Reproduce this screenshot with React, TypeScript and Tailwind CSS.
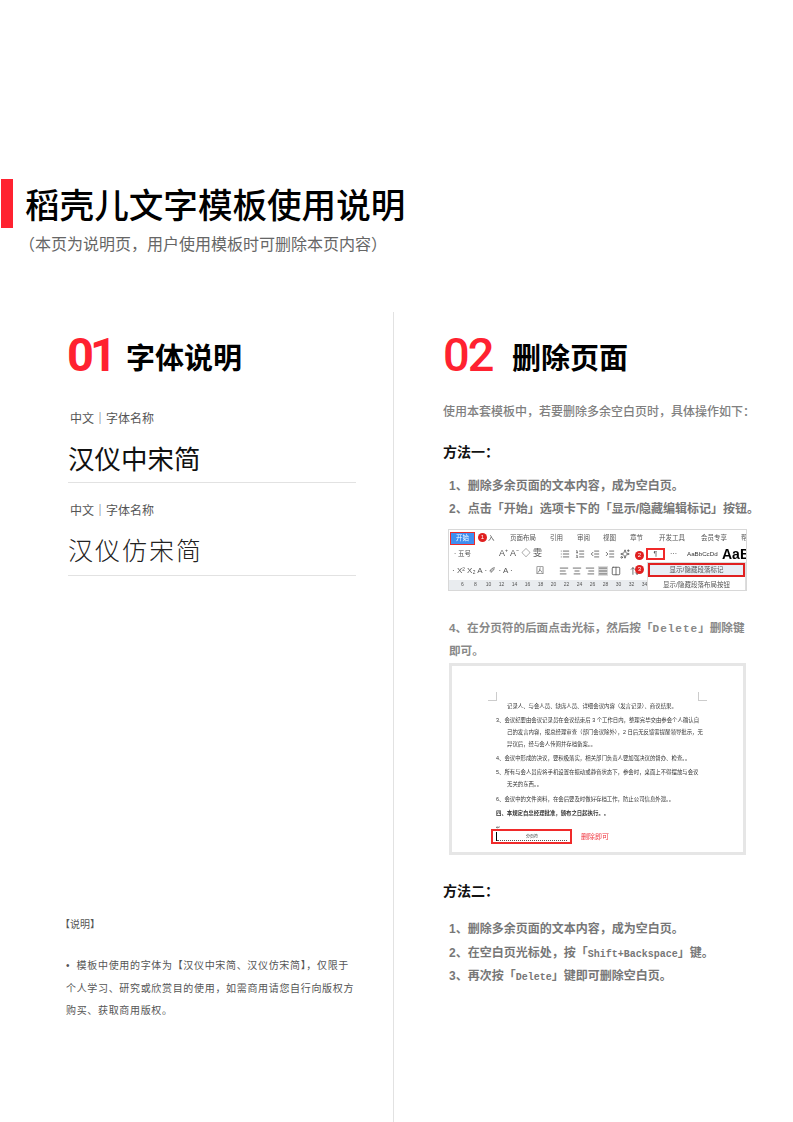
import { AlignCenter, AlignJustify, AlignLeft, AlignRight, ArrowUpDown, Columns2, Indent, List, ListOrdered, Outdent, Sparkles } from "lucide-react";

const cjk = "font-['Liberation_Sans','Noto_Sans_CJK_SC',sans-serif]";

const tabs = [
  { name: "页面布局", w: "w-[40px]" },
  { name: "引用", w: "w-[27px]" },
  { name: "审阅", w: "w-[26px]" },
  { name: "视图", w: "w-[27px]" },
  { name: "章节", w: "w-[29px]" },
  { name: "开发工具", w: "w-[42px]" },
  { name: "会员专享", w: "w-[40px]" },
];

const rulerMarks = [6, 8, 10, 12, 14, 16, 18, 20, 22, 24, 26, 28, 30, 32, 34];

const docLines = [
  { text: "记录人、与会人员、缺席人员、详细会议内容（发言记录）、商议结果。", cls: "pl-[11px] mb-[7px]" },
  { text: "3、会议纪要由会议记录员在会议结束后 3 个工作日内，整理完毕交由参会个人确认自", cls: "mb-[5px]" },
  { text: "己的发言内容，报总经理审查（部门会议除外），2 日后无反馈需提醒领导批示，无", cls: "pl-[11px] mb-[5px]" },
  { text: "异议后，经与会人传阅并存档备案。。", cls: "pl-[11px] mb-[7px]" },
  { text: "4、会议中形成的决议，要积极落实，相关部门负责人要加强决议的督办、检查。。", cls: "mb-[7px]" },
  { text: "5、所有与会人员应将手机设置在振动或静音状态下，参会时，桌面上不得摆放与会议", cls: "mb-[5px]" },
  { text: "无关的东西。。", cls: "pl-[11px] mb-[8px]" },
  { text: "6、会议中的文件资料，在会后要及时做好存档工作，防止公司信息外泄。。", cls: "mb-[7px]" },
];

function Badge({ n, pos }: { n: number; pos: string }) {
  return <span className={`absolute flex h-[9px] w-[9px] items-center justify-center rounded-full bg-[#e02020] text-[6px] text-white ${pos}`}>{n}</span>;
}

function Ribbon() {
  return (
    <div className="relative h-[62px] w-[299px] overflow-hidden border border-[#d8d8d8] bg-white text-[#555] blur-[0.35px]">
      {/* tabs */}
      <div className="flex h-[16px] items-center text-[6.5px]">
        <div className="ml-[1px] flex h-[13px] w-[25px] shrink-0 items-center justify-center border border-[#ee2a2a] bg-[#3f8ef0] text-white">开始</div>
        <span className="ml-[13px] w-[22px] shrink-0">入</span>
        {tabs.map((tab) => (
          <span key={tab.name} className={`${tab.w} shrink-0`}>
            {tab.name}
          </span>
        ))}
        <span>帮</span>
      </div>
      {/* font and paragraph rows */}
      <div className="flex h-[16px] items-center pl-[5px] text-[8px]">
        <span className="w-[45px] shrink-0 text-[6.5px]">· 五号</span>
        <span className="w-[61px] shrink-0 text-[9px]">A⁺ A⁻ ◇ 雯</span>
        <div className="flex w-[82px] shrink-0 gap-[5px]">
          <List size={10} />
          <ListOrdered size={10} />
          <Outdent size={10} />
          <Indent size={10} />
          <Sparkles size={10} />
        </div>
        <div className="ml-[4px] flex h-[12px] w-[19px] shrink-0 items-center justify-center border-2 border-[#f02a2a] text-[7px]">¶</div>
        <span className="ml-[5px] w-[17px] shrink-0 text-[7px]">···</span>
        <div className="w-[35px] shrink-0 text-[6.2px] text-[#333]">AaBbCcDd</div>
        <span className="text-[14px] leading-none font-bold text-black">AaB</span>
      </div>
      <div className="flex h-[17px] items-center pl-[3px] text-[8px]">
        <span className="w-[84px] shrink-0 whitespace-nowrap">· X² X₂ A · ✐ · A ·</span>
        <span className="w-[23px] shrink-0 border-0">囚</span>
        <div className="flex shrink-0 gap-[3px]">
          <AlignLeft size={10} />
          <AlignCenter size={10} />
          <AlignRight size={10} />
          <AlignJustify size={10} className="bg-[#ddd]" />
          <Columns2 size={10} />
          <ArrowUpDown size={10} className="ml-[6px]" />
        </div>
      </div>
      {/* ruler */}
      <div className="mt-[1px] flex h-[10px] items-center bg-[#e9ecef] pl-[7px] text-[5px]">
        {rulerMarks.map((mark) => (
          <span key={mark} className="w-[13px] shrink-0 text-center">
            {mark}
          </span>
        ))}
      </div>
      {/* dropdown */}
      <div className="absolute top-[32px] left-[198px] w-[99px] border border-[#ddd] bg-white text-center text-[6.5px]">
        <div className="flex h-[14px] items-center justify-center border-2 border-[#e02020] bg-[#e8eef5]">显示/隐藏段落标记</div>
        <div className="flex h-[15px] items-center justify-center">显示/隐藏段落布局按钮</div>
      </div>
      <Badge n={1} pos="top-[3px] left-[29px]" />
      <Badge n={2} pos="top-[21px] left-[186px]" />
      <Badge n={3} pos="top-[35px] left-[186px]" />
    </div>
  );
}

function DocShot() {
  return (
    <div className="relative h-[192px] w-[297px] border-[3px] border-[#e6e6e6] bg-white pt-[37px] pr-[46px] pl-[44px] text-[5.4px] leading-[7px] text-[#333] blur-[0.35px]">
      <div className="absolute top-[26px] left-[36px] h-[9px] w-[9px] border-r border-b border-[#ccc]" />
      <div className="absolute top-[26px] right-[36px] h-[9px] w-[9px] border-b border-l border-[#ccc]" />
      {docLines.map((line) => (
        <p key={line.text} className={`${line.cls} whitespace-nowrap`}>
          {line.text}
        </p>
      ))}
      <p className="font-bold whitespace-nowrap">四、本规定自总经理批准，颁布之日起执行。。</p>
      <p className="mt-[7px]">↵</p>
      <div className="mt-[-2px] -ml-[5px] flex items-center">
        <div className="flex h-[15px] w-[81px] shrink-0 items-center border-2 border-[#f02a2a] px-[3px] text-[4px]">
          <span className="h-[9px] w-[1px] bg-black" />
          <span className="flex-1 border-b border-dotted border-[#555] text-center">分页符</span>
        </div>
        <span className="ml-[9px] text-[7px] text-[#f0353f]">删除即可</span>
      </div>
    </div>
  );
}

function FontSample({ name, wide }: { name: string; wide?: boolean }) {
  return (
    <div>
      <div className="pl-[2px] text-[12px] leading-[18px] text-[#555]">中文｜字体名称</div>
      {wide ? (
        <div className="mt-[14px] h-[42px] border-b border-[#e2e2e2] text-[25px] leading-[34px] font-extralight tracking-[2px] text-[#222]">{name}</div>
      ) : (
        <div className="mt-[14px] h-[41px] border-b border-[#e2e2e2] text-[26.5px] leading-[36px] text-[#111]">{name}</div>
      )}
    </div>
  );
}

export default function App() {
  return (
    <div className={`${cjk} h-[1122px] w-[793px] overflow-hidden bg-white`}>
      {/* Header */}
      <div className="flex pt-[179px] pl-[1px]">
        <div className="h-[49px] w-[12px] bg-[#ff2230]" />
        <h1 className="ml-[12px] text-[34.6px] leading-[54px] font-medium text-black">稻壳儿文字模板使用说明</h1>
      </div>
      <p className="mt-[0px] pl-[19px] text-[16px] leading-[24px] text-[#666]">（本页为说明页，用户使用模板时可删除本页内容）</p>

      <div className="mt-[55px] flex h-[810px]">
        {/* Left column */}
        <div className="flex w-[394px] flex-col border-r border-[#e2e2e2] pr-[37px] pl-[68px]">
          <div className="flex h-[84px] items-center">
            <span className="-ml-[1px] w-[59px] shrink-0 font-['Roboto'] text-[47px] leading-none font-bold tracking-[-4px] text-[#ff2230]">01</span>
            <span className="mt-[11px] text-[29px] font-bold text-black">字体说明</span>
          </div>
          <div className="mt-[14px] flex flex-col gap-[19px]">
            <FontSample name="汉仪中宋简" />
            <FontSample name="汉仪仿宋简" wide />
          </div>
          <div className="mt-[338px] text-[10px] text-[#555]">
            <p className="-ml-[8px] leading-[22px]">【说明】</p>
            <p className="mt-[19px] -ml-[2px] text-[10px] leading-[22.5px] tracking-[0.67px] whitespace-nowrap">
              <span className="mr-[3px]">•</span> 模板中使用的字体为【汉仪中宋简、汉仪仿宋简】，仅限于
              <br />
              个人学习、研究或欣赏目的使用，如需商用请您自行向版权方
              <br />
              购买、获取商用版权。
            </p>
          </div>
        </div>

        {/* Right column */}
        <div className="flex-1 pl-[49px]">
          <div className="flex h-[84px] items-center">
            <span className="w-[69px] shrink-0 font-['Roboto'] text-[47px] leading-none font-medium tracking-[-2px] text-[#ff2230]">02</span>
            <span className="mt-[11px] text-[29px] font-bold text-black">删除页面</span>
          </div>
          <p className="mt-[7px] text-[12px] leading-[18px] font-medium text-[#808080]">使用本套模板中，若要删除多余空白页时，具体操作如下：</p>
          <h3 className="mt-[22px] text-[14px] leading-[18px] font-bold text-[#111]">方法一：</h3>
          <ol className="mt-[14px] pl-[6px] text-[12px] leading-[23px] font-bold whitespace-nowrap text-[#777]">
            <li>1、删除多余页面的文本内容，成为空白页。</li>
            <li>2、点击「开始」选项卡下的「显示/隐藏编辑标记」按钮。</li>
          </ol>
          <div className="mt-[8px] pl-[5px]">
            <Ribbon />
          </div>
          <p className="mt-[25px] pl-[6px] text-[11.6px] leading-[23px] font-bold whitespace-nowrap text-[#888]">
            4、在分页符的后面点击光标，然后按「<span className="font-['Liberation_Mono'] text-[11px] leading-none tracking-[1px]">Delete</span>」删除键
            <br />
            即可。
          </p>
          <div className="mt-[1px] pl-[6px]">
            <DocShot />
          </div>
          <h3 className="mt-[27px] text-[14px] leading-[18px] font-bold text-[#111]">方法二：</h3>
          <ol className="mt-[18px] pl-[6px] text-[12px] leading-[23.5px] font-bold whitespace-nowrap text-[#777]">
            <li>1、删除多余页面的文本内容，成为空白页。</li>
            <li>
              2、在空白页光标处，按「<span className="font-['Liberation_Mono'] text-[10px] leading-none">Shift+Backspace</span>」键。
            </li>
            <li>
              3、再次按「<span className="font-['Liberation_Mono'] text-[10px] leading-none">Delete</span>」键即可删除空白页。
            </li>
          </ol>
        </div>
      </div>
    </div>
  );
}
